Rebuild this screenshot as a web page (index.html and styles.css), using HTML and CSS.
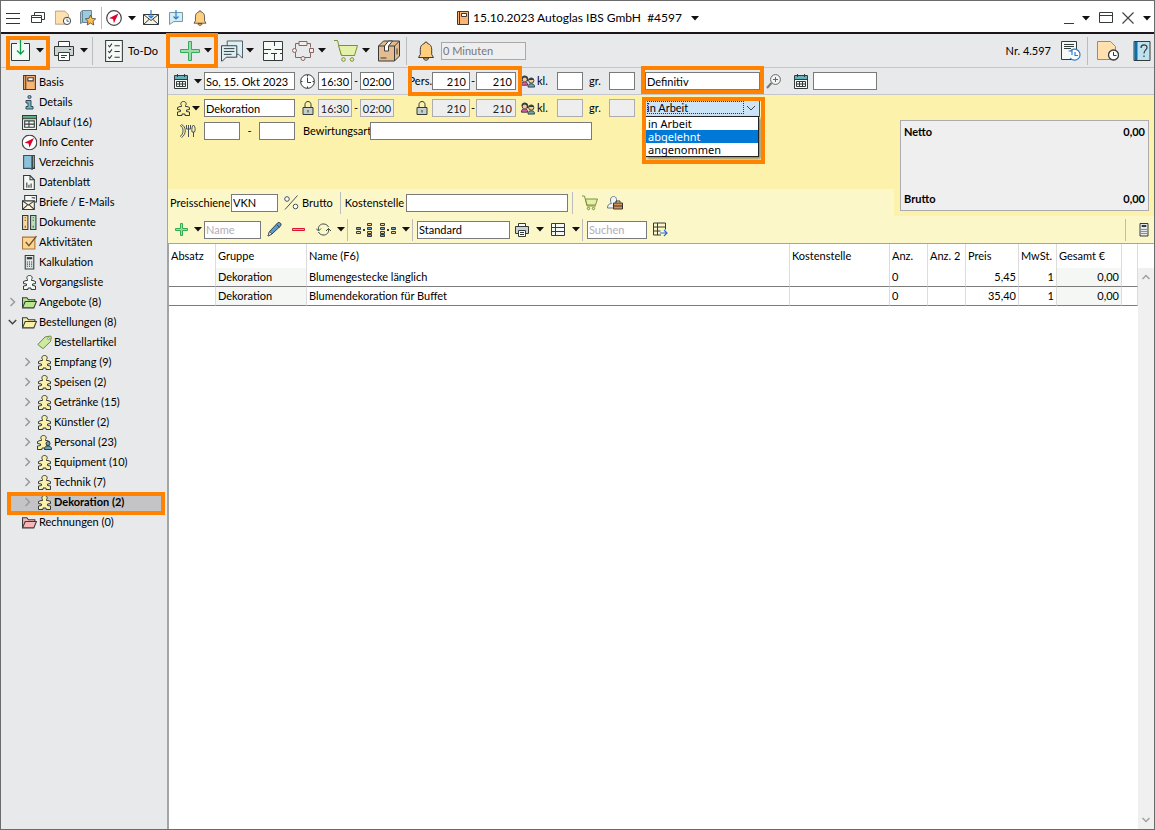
FILE: index.html
```html
<!DOCTYPE html>
<html lang="de">
<head>
<meta charset="utf-8">
<title>15.10.2023 Autoglas IBS GmbH #4597</title>
<link rel="stylesheet" href="styles.css">
</head>
<body>
<svg class="defs" aria-hidden="true">
  <symbol id="down" viewBox="0 0 8 5"><path d="M0 0h8L4 4.600z" fill="#111"/></symbol>
  <symbol id="menu" viewBox="0 0 14 14"><path d="M0 2.500h14M0 7.500h14M0 12.500h14" stroke="#333"/></symbol>
  <symbol id="windows" viewBox="0 0 14 14" fill="none" stroke="#333b3b"><path d="M3.500 4V1.500h10v7H11M.5 4.500h10v7H.5zM.5 6.500h10"/></symbol>
  <symbol id="folderclock" viewBox="0 0 22 20"><path d="M.5 18.500V.5h13l5 5v10l-3 3z" fill="#ffe0ae" stroke="#9a8a70"/><circle cx="16.500" cy="14" r="5" fill="#fff" stroke="#333b3b" stroke-width="1.300"/><path d="M16.500 11v3.500h3" fill="none" stroke="#333b3b"/></symbol>
  <symbol id="bookstar" viewBox="0 0 16 16"><path d="M.5 13.500V2l2-1.500h9v12h-9z" fill="#9ccbe0" stroke="#6b8794"/><path d="M2.500.5v12" stroke="#6b8794"/><path d="M10.500 5l1.600 3.400 3.600.4-2.700 2.500.8 3.700-3.300-1.900-3.300 1.900.8-3.700-2.700-2.500 3.600-.4z" fill="#fdbf4c" stroke="#4d463c" stroke-width=".8"/></symbol>
  <symbol id="compass" viewBox="0 0 16 16"><circle cx="8" cy="8" r="7.300" fill="#fff" stroke="#444" stroke-width="1.200"/><path d="M12.500 3.500L3 8.200l4.100.9.800 4.100z" fill="#e1002d"/></symbol>
  <symbol id="mail" viewBox="0 0 16 16"><path d="M.5 4.500h15v10H.5z" fill="#f8f4e8" stroke="#333b3b"/><path d="M.5 4.500l7.500 6 7.500-6M.5 14.500l5.500-5M15.500 14.500l-5.500-5" fill="none" stroke="#333b3b"/><path d="M8 0v8M5.500 5.500L8 8l2.500-2.500" fill="none" stroke="#2a7fd0" stroke-width="1.200"/></symbol>
  <symbol id="bubble" viewBox="0 0 14 16"><path d="M.5 2.500h13v9H5l-4.500 3z" fill="#d5edf4" stroke="#7899a4"/><path d="M7 0v9M4.500 6.500L7 9l2.500-2.500" fill="none" stroke="#2a7fd0" stroke-width="1.200"/></symbol>
  <symbol id="bell" viewBox="0 0 16 20"><path d="M6.500 2.500a1.500 1.500 0 0 1 3 0c3 .8 4.200 3 4.200 6v5l1.800 3H.5l1.800-3v-5c0-3 1.200-5.200 4.200-6z" fill="#ffcf7d" stroke="#3c3c3c"/><path d="M5.500 17h5c0 3-5 3-5 0z" fill="#f4b860" stroke="#3c3c3c"/></symbol>
  <symbol id="book" viewBox="0 0 12 14"><path d="M.5.5h11v13H.5z" fill="#fab473" stroke="#3f3a36"/><path d="M2.500.5v13" stroke="#3f3a36"/><path d="M4.500 2.500h5v3h-5z" fill="#fff" stroke="#3f3a36"/></symbol>
  <symbol id="min" viewBox="0 0 10 14"><path d="M0 12.500h10" stroke="#333b3b"/></symbol>
  <symbol id="max" viewBox="0 0 14 12"><path d="M.5.5h13v10H.5zM.5 3.500h13" fill="none" stroke="#333b3b"/></symbol>
  <symbol id="close" viewBox="0 0 12 12"><path d="M.5.5l11 11M11.500.5l-11 11" stroke="#444" stroke-width="1.200"/></symbol>
  <symbol id="save" viewBox="0 0 20 22"><path d="M6 3.500H.5v17h18v-17H13" fill="#f6faf6" stroke="#333b3b"/><path d="M9.500 0v14M6 10.500l3.500 3.500 3.500-3.500" fill="none" stroke="#0aa04a" stroke-width="1.300"/></symbol>
  <symbol id="printer" viewBox="0 0 20 20"><path d="M4.500 6V.5h11V6" fill="#fff" stroke="#333b3b"/><path d="M.5 5.500h19v9H.5z" fill="#ccd3d3" stroke="#333b3b"/><path d="M4.500 11.500h11v8h-11z" fill="#fff" stroke="#333b3b"/><path d="M7 14.500h6M7 16.500h4M15 8.500h2" stroke="#333b3b"/></symbol>
  <symbol id="printersmall" viewBox="0 0 14 14"><path d="M3.500 4V.5h7V4" fill="#fff" stroke="#333b3b"/><path d="M.5 3.500h13v7H.5z" fill="#ccd3d3" stroke="#333b3b"/><path d="M3.500 7.500h7v6h-7z" fill="#fff" stroke="#333b3b"/><path d="M5 9.500h4M5 11.500h4" stroke="#333b3b"/></symbol>
  <symbol id="checklist" viewBox="0 0 17 21"><path d="M.5.5h16v20H.5z" fill="#f6faf6" stroke="#333b3b"/><path d="M3 5l1.300 1.500L6.500 3.500M3 10.500L4.300 12l2.200-3M3 16l1.300 1.500 2.200-3M9 5.500h5M9 11h5M9 16.500h5" fill="none" stroke="#333b3b"/></symbol>
  <symbol id="plus" viewBox="0 0 20 20"><path d="M8.500.5h3v8h8v3h-8v8h-3v-8h-8v-3h8z" fill="#9bdcae" stroke="#35ab56"/></symbol>
  <symbol id="plussmall" viewBox="0 0 14 14"><path d="M5.500.5h2v5h5v2h-5v5h-2v-5h-5v-2h5z" fill="#9bdcae" stroke="#35ab56"/></symbol>
  <symbol id="chat" viewBox="0 0 23 22"><path d="M6.500.5h16v18l-4-4H6.500z" fill="#dceff4" stroke="#4a5a5e"/><path d="M.5 5.500h16v12h-11l-4 4H.5z" fill="#dceff4" stroke="#333b3b"/><path d="M3 8.500h11M3 11.500h11M3 14.500h8" stroke="#333b3b"/></symbol>
  <symbol id="plan" viewBox="0 0 20 20"><path d="M.5.5h19v19H.5z" fill="#f6faf6" stroke="#333b3b"/><path d="M0 8.500h8M11.500 0v5M11.500 8.500h8M0 12.500h5M8 12.500h6M11.500 12.500v7M17 12.500h3" fill="none" stroke="#333b3b"/></symbol>
  <symbol id="ring" viewBox="0 0 22 20" fill="#f5ecec" stroke="#8a6464"><path d="M7 2.500H3.500v14H9M15 2.500h3.500v4M18.500 11v5.500H13" fill="none"/><path d="M7 .5h8v4H7zM17.500 7.500h4v4h-4z"/><circle cx="2.500" cy="9.500" r="2"/><circle cx="11" cy="17.500" r="2"/></symbol>
  <symbol id="cart" viewBox="0 0 24 22"><path d="M0 .5h3.500l4 15H21" fill="none" stroke="#7c9136"/><path d="M4.500 5.500h19l-3 10h-13z" fill="#e3f1a9" stroke="#7c9136"/><circle cx="9.500" cy="19.500" r="1.800" fill="#e3f1a9" stroke="#7c9136"/><circle cx="18" cy="19.500" r="1.800" fill="#e3f1a9" stroke="#7c9136"/></symbol>
  <symbol id="cartsmall" viewBox="0 0 16 15"><path d="M0 .5h2.500l2.500 10h9" fill="none" stroke="#7c9136"/><path d="M3.500 3.500h12l-2 6h-8.500z" fill="#e3f1a9" stroke="#7c9136"/><circle cx="6.500" cy="13" r="1.200" fill="#e3f1a9" stroke="#7c9136"/><circle cx="11.500" cy="13" r="1.200" fill="#e3f1a9" stroke="#7c9136"/></symbol>
  <symbol id="box" viewBox="0 0 22 21"><path d="M.5 5.500l5-5h16v15l-5 5H.5z" fill="#e3bd91" stroke="#3c3a37"/><path d="M.5 5.500h16l5-5M16.500 5.500v15" fill="none" stroke="#3c3a37"/><path d="M6.500 5.500l4-5h4l-4 5v5h-4z" fill="#fff" stroke="#3c3a37"/><path d="M2.500 17.500h6M19 8v6" stroke="#3c3a37"/></symbol>
  <symbol id="history" viewBox="0 0 20 20"><path d="M.5.5h15v18H.5z" fill="#f6faf6" stroke="#333b3b"/><path d="M3 3.500h10M3 5.500h10M3 7.500h7" stroke="#333b3b"/><circle cx="14" cy="14" r="5.200" fill="#fff"/><path d="M9 10.500a5.500 5.500 0 1 1 .2 6.500M7.500 10h3.500v4M14 11v3.500h3" fill="none" stroke="#2a7fc8" stroke-width="1.200"/></symbol>
  <symbol id="help" viewBox="0 0 17 20"><path d="M.5.500h16v19H.5z" fill="#bfe0ee" stroke="#333b3b"/><path d="M1 1h3v18H1z" fill="#0b6ea8"/><path d="M7.500 7c0-4 6-4 6-.5 0 2.500-3 2.500-3 6M10.500 14.500v1.500" fill="none" stroke="#333b3b" stroke-width="1.200"/></symbol>
  <symbol id="info" viewBox="0 0 10 15"><circle cx="5" cy="2" r="1.600" fill="#6fb5cc" stroke="#3b4a50"/><path d="M1.500 5.500h5v6h2v2.500h-7v-2.500h2v-3.500h-2z" fill="#6fb5cc" stroke="#3b4a50"/></symbol>
  <symbol id="schedule" viewBox="0 0 14 14"><path d="M.5.5h13v13H.5z" fill="#f6faf6" stroke="#333b3b"/><path d="M1 1h12v2.500H1z" fill="#54a978"/><path d="M.5 3.500h13M2.500 5.500h9v6h-9zM2.500 8.500h9M6.500 5.500v6" fill="none" stroke="#333b3b"/></symbol>
  <symbol id="dir" viewBox="0 0 12 14"><path d="M2.500.5h8v12h-2" fill="#8cc3d8" stroke="#333b3b"/><path d="M.5.5h8v13l-2-1h-6z" fill="#8cc3d8" stroke="#35525e"/><path d="M8.500 1v12M10.500 11v2" stroke="#333b3b"/></symbol>
  <symbol id="sheet" viewBox="0 0 12 14"><path d="M.5.5h6l4 4v9H.5z" fill="#f6faf6" stroke="#333b3b"/><path d="M6.500.5v4h4M3.500 7v5M5.500 9v3M7.500 8v4" fill="none" stroke="#333b3b"/></symbol>
  <symbol id="letters" viewBox="0 0 14 14"><path d="M2.500 5V.5h11v6H12" fill="#f6faf6" stroke="#333b3b"/><path d="M9 2.500h2.500v1" fill="none" stroke="#333b3b"/><path d="M.5 5.500h11v8H.5z" fill="#fff6dc" stroke="#333b3b"/><path d="M.5 5.500l5.500 4 5.500-4M.5 13.500L5 9.500M11.500 13.500L7 9.500" fill="none" stroke="#333b3b"/></symbol>
  <symbol id="docs" viewBox="0 0 14 14"><path d="M.5.5h5v13h-5z" fill="#fbd79a" stroke="#333b3b"/><path d="M8 .5h5v13H8z" fill="#b9dfbd" stroke="#333b3b"/><path d="M3 2v1M3 4.500v1M3 10v2M10.500 2v1M10.500 4.500v1M10.500 10v2" stroke="#555"/></symbol>
  <symbol id="tasks" viewBox="0 0 14 13"><path d="M.5 1.500h11.500v11H.5z" fill="#fdd592" stroke="#a8763a"/><path d="M3.500 6l3 3.500L13.500.5" fill="none" stroke="#6d5026" stroke-width="1.200"/></symbol>
  <symbol id="calc" viewBox="0 0 9 14"><path d="M.5.500h8v12.500h-8z" fill="#e4e8e8" stroke="#333b3b"/><path d="M2.500 2.500h4v1h-4z" fill="#777" stroke="#333b3b"/><path d="M2 6.500h1m1 0h1m1 0h1M2 8.500h1m1 0h1m1 0h1M2 10.500h1m1 0h1m1 0h1" stroke="#333b3b"/></symbol>
  <symbol id="puzzle" viewBox="0 0 13 15"><path d="M.5 6.500L3 5.500H4.500V4.600C3 2.500 4.200.5 6.500.5s3.500 2 2 4.100v.9H10l2.500 1v2L9.500 9v1.500l3 .5v3.500H8V13H5v1.500H.5V11l3-.5V9l-3-.5z" stroke="#333b3b"/></symbol>
  <symbol id="person" viewBox="0 0 8 9"><circle cx="4" cy="2.500" r="2" fill="#68a7b9" stroke="#333b3b"/><path d="M.5 8.500c0-3 1.500-3.500 3.500-3.500s3.500.5 3.500 3.500z" fill="#68a7b9" stroke="#333b3b"/></symbol>
  <symbol id="folder" viewBox="0 0 14 12"><path d="M.5 10.500V1.500h4l1.500 2h6V5" stroke="#333b3b"/><path d="M.5 11l2.500-6h10.500L11 11z" stroke="#333b3b"/></symbol>
  <symbol id="tag" viewBox="0 0 15 14"><path d="M.8 9L8 1.500l5.500-1 .8 1-.8 4.500-7.500 7.200z" fill="#cdea9f" stroke="#6b8a45"/><circle cx="11.500" cy="3.200" r="1" fill="#fff" stroke="#6b8a45" stroke-width=".7"/></symbol>
  <symbol id="right" viewBox="0 0 8 10"><path d="M2 1l4 4-4 4" fill="none" stroke="#9a9a9a" stroke-width="1.500"/></symbol>
  <symbol id="open" viewBox="0 0 9 10"><path d="M.8 3L4.500 6.700 8.200 3" fill="none" stroke="#444" stroke-width="1.500"/></symbol>
  <symbol id="cal" viewBox="0 0 15 15"><path d="M.5 1.500h13v13H.5z" fill="#f6faf6" stroke="#333b3b"/><path d="M1 2h12v3H1z" fill="#67b1ba"/><path d="M.5 5.500h13M3.500 0v3M10.500 0v3M2.500 7.500h9v5h-9zM2.500 10h9M5.500 7.500v5M8.500 7.500v5" fill="none" stroke="#333b3b"/></symbol>
  <symbol id="clock" viewBox="0 0 15 15"><circle cx="7.500" cy="7.500" r="6.900" fill="#fff" stroke="#333b3b"/><path d="M7.500 3.500v5H11M7.500 1v1.500M7.500 12.500V14M1 7.500h1.500M12.500 7.500H14" fill="none" stroke="#333b3b"/></symbol>
  <symbol id="lock" viewBox="0 0 11 14"><path d="M2.500 6V3.500c0-4 6-4 6 0V6" fill="none" stroke="#333b3b"/><path d="M.5 6.500h10v7H.5z" fill="#c6cfc9" stroke="#333b3b"/><path d="M5.500 9v2.500" stroke="#333b3b"/></symbol>
  <symbol id="dining" viewBox="0 0 17 14" fill="none" stroke="#46505a"><path d="M1 1.500c4 1 4 9 0 11M2.500.5c5 2 5 10 0 13"/><path d="M7.500 1v4h4V1M9.500 1v12M14.500 13V8h-1.500c-.5-3 0-6 1.500-7 2 2 2 5 1 7h-1"/></symbol>
  <symbol id="kids" viewBox="0 0 15 14"><path d="M.5 4.500c0-5 7-4 7-1l1 3-2 1-5 0z" fill="#333b3b"/><circle cx="4" cy="5.500" r="2.200" fill="#f4c9a0"/><path d="M.5 11.500c0-3 1.500-3.500 3.500-3.500s3 .5 3 3.500z" fill="#e758a9" stroke="#333b3b"/><circle cx="11" cy="6.500" r="2.800" fill="#f4c9a0" stroke="#333b3b"/><path d="M8 6c1-3 5-3 6 0z" fill="#333b3b"/><path d="M7.500 13.500c0-3 1.500-3.500 3.500-3.500s3.500.5 3.500 3.500z" fill="#68a7b9" stroke="#333b3b"/></symbol>
  <symbol id="search" viewBox="0 0 15 15"><circle cx="9.500" cy="5.500" r="4.900" fill="#f4f4f4" stroke="#666"/><path d="M9.500 3v5M7 5.500h5" stroke="#666"/><path d="M5.500 9L1 14" stroke="#777" stroke-width="2"/></symbol>
  <symbol id="percent" viewBox="0 0 15 15" fill="#fff" stroke="#46505a"><circle cx="3" cy="4" r="2.300"/><circle cx="11.500" cy="11.500" r="2.300"/><path d="M13.500.5L1 14.500"/></symbol>
  <symbol id="client" viewBox="0 0 16 15"><path d="M.5 12.500c0-3 1-4 4-4.500-2-3-1-7 2-7s4 3.500 2 7l1 4.500z" fill="#f0f6f8" stroke="#6c7a7e"/><path d="M6.500 7.500h9v6h-9z" fill="#d8914f" stroke="#3c3430"/><path d="M9 7V5.500h4V7M6.500 10.500h9" fill="none" stroke="#3c3430"/></symbol>
  <symbol id="pencil" viewBox="0 0 15 15"><path d="M1 14l1.500-4.500 8.500-9c2-.5 3.500 1 3 3l-9 8.500z" fill="#5b9ad0" stroke="#37474f"/><path d="M1 14l1.500-4.500L5 12z" fill="#f2e6d0" stroke="#37474f" stroke-width=".7"/><path d="M9.500 2.500l3 3" stroke="#37474f"/></symbol>
  <symbol id="minus" viewBox="0 0 14 4"><path d="M.5.5h12v2H.5z" fill="#ff9caf" stroke="#dd1434"/></symbol>
  <symbol id="refresh" viewBox="0 0 15 14" fill="none" stroke="#3c4a44"><path d="M2.500 8C1.500 4 4.500 1 8 1.500c2.500.3 3.800 1.500 4.500 3M12.500 6c1 4-2 7-5.500 6.500-2.500-.3-3.800-1.500-4.500-3"/><path d="M0 6l2.500 2.500L5 6M10 8.500L12.500 6 15 8.500"/></symbol>
  <symbol id="colA" viewBox="0 0 16 14"><path d="M.5 4.500h4v2h-4z" fill="#6aa5c8" stroke="#333b3b"/><path d="M.5 8.500h4v2h-4z" fill="#fdd592" stroke="#333b3b"/><path d="M7 7h2" stroke="#333b3b" stroke-width="2"/><path d="M11.500.5h4v2h-4zM11.500 8.500h4v2h-4z" fill="#fdd592" stroke="#333b3b"/><path d="M11.500 4.500h4v2h-4zM11.500 11.500h4v2h-4z" fill="#6aa5c8" stroke="#333b3b"/></symbol>
  <symbol id="tbl" viewBox="0 0 14 14"><path d="M.5.5h13v12H.5z" fill="#f6faf6" stroke="#333b3b"/><path d="M.5 4.500h13M.5 8.500h13M4.500.5v12" stroke="#333b3b"/></symbol>
  <symbol id="export" viewBox="0 0 15 14"><path d="M8 12.500H.5V.5h12V7M.5 4.500h12M.5 8.500h7M4.500.5v12" fill="none" stroke="#333b3b"/><path d="M7 10.500h7M11 7.500l3 3-3 3" fill="none" stroke="#2a6fd0" stroke-width="1.200"/></symbol>
  <symbol id="up" viewBox="0 0 8 6"><path d="M.5 5L4 1.500 7.500 5" fill="none" stroke="#a0a0a0" stroke-width="1.500"/></symbol>
  <symbol id="chevron" viewBox="0 0 10 6"><path d="M1 1l4 4 4-4" fill="none" stroke="#444"/></symbol>
</svg>

<div class="window">
  <header class="titlebar">
    <nav class="bar" aria-label="Schnellzugriff">
      <button class="tool w24" aria-label="Menü"><svg class="i14"><use href="#menu"/></svg></button>
      <button class="tool w26" aria-label="Fenster"><svg class="i14"><use href="#windows"/></svg></button>
      <button class="tool w24" aria-label="Termin"><svg class="i16"><use href="#folderclock"/></svg></button>
      <button class="tool w26" aria-label="Favoriten"><svg class="i16"><use href="#bookstar"/></svg></button>
      <span class="sep"></span>
      <button class="tool w24" aria-label="Info Center"><svg class="i16"><use href="#compass"/></svg></button>
      <button class="tool w12" aria-label="Mehr"><svg class="arrow"><use href="#down"/></svg></button>
      <button class="tool w26" aria-label="Mail"><svg class="i16"><use href="#mail"/></svg></button>
      <button class="tool w24" aria-label="Notiz"><svg class="i16"><use href="#bubble"/></svg></button>
      <button class="tool w24" aria-label="Erinnerung"><svg class="i16"><use href="#bell"/></svg></button>
    </nav>
    <h1 class="title"><svg class="i14"><use href="#book"/></svg><span>15.10.2023 Autoglas IBS GmbH&nbsp; #4597</span><svg class="arrow"><use href="#down"/></svg></h1>
    <div class="bar bar-end">
      <button class="tool w14" aria-label="Minimieren"><svg class="i14"><use href="#min"/></svg></button>
      <button class="tool w20" aria-label="Mehr"><svg class="arrow"><use href="#down"/></svg></button>
      <button class="tool w20" aria-label="Maximieren"><svg class="i14"><use href="#max"/></svg></button>
      <button class="tool w24" aria-label="Schließen"><svg class="i12"><use href="#close"/></svg></button>
      <button class="tool w14" aria-label="Mehr"><svg class="arrow"><use href="#down"/></svg></button>
    </div>
  </header>

  <div class="toolbar">
    <div class="tools-left">
      <div class="mark mark-save">
        <button class="tool w24" aria-label="Speichern"><svg class="i22"><use href="#save"/></svg></button>
        <button class="tool w14" aria-label="Speicheroptionen"><svg class="arrow"><use href="#down"/></svg></button>
      </div>
      <button class="tool w26" aria-label="Drucken"><svg class="i20"><use href="#printer"/></svg></button>
      <button class="tool w14" aria-label="Druckoptionen"><svg class="arrow"><use href="#down"/></svg></button>
      <span class="sep tall"></span>
      <button class="tool todo"><svg class="i22"><use href="#checklist"/></svg>To-Do</button>
    </div>
    <div class="tools-main">
      <div class="mark mark-add">
        <button class="tool w24" aria-label="Hinzufügen"><svg class="i20"><use href="#plus"/></svg></button>
        <button class="tool w12" aria-label="Mehr"><svg class="arrow"><use href="#down"/></svg></button>
      </div>
      <button class="tool w24" aria-label="Kommentare"><svg class="i22"><use href="#chat"/></svg></button>
      <button class="tool w12" aria-label="Mehr"><svg class="arrow"><use href="#down"/></svg></button>
      <button class="tool w34" aria-label="Raumplan"><svg class="i20"><use href="#plan"/></svg></button>
      <button class="tool w26" aria-label="Ablauf"><svg class="i22"><use href="#ring"/></svg></button>
      <button class="tool w12" aria-label="Mehr"><svg class="arrow"><use href="#down"/></svg></button>
      <button class="tool cartbtn" aria-label="Warenkorb"><svg class="i24"><use href="#cart"/></svg></button>
      <button class="tool w12" aria-label="Mehr"><svg class="arrow"><use href="#down"/></svg></button>
      <button class="tool w34" aria-label="Paket"><svg class="i22"><use href="#box"/></svg></button>
      <span class="sep tall"></span>
      <button class="tool bellbtn" aria-label="Erinnerung"><svg class="i20"><use href="#bell"/></svg></button>
      <input class="minutes" aria-label="Erinnerung in Minuten" value="0 Minuten" disabled>
    </div>
    <div class="tools-right">
      <span>Nr. 4.597</span>
      <button class="tool w36" aria-label="Verlauf"><svg class="i20"><use href="#history"/></svg></button>
      <span class="sep tall"></span>
      <button class="tool w40" aria-label="Wiedervorlage"><svg class="i22"><use href="#folderclock"/></svg></button>
      <button class="tool w26" aria-label="Hilfe"><svg class="i20"><use href="#help"/></svg></button>
    </div>
  </div>

  <div class="body">
    <nav class="sidebar" aria-label="Vorgang">
      <ul class="tree">
        <li><i></i><svg><use href="#book"/></svg>Basis</li>
        <li><i></i><svg><use href="#info"/></svg>Details</li>
        <li><i></i><svg><use href="#schedule"/></svg>Ablauf (16)</li>
        <li><i></i><svg class="big"><use href="#compass"/></svg>Info Center</li>
        <li><i></i><svg><use href="#dir"/></svg>Verzeichnis</li>
        <li><i></i><svg><use href="#sheet"/></svg>Datenblatt</li>
        <li><i></i><svg><use href="#letters"/></svg>Briefe / E-Mails</li>
        <li><i></i><svg><use href="#docs"/></svg>Dokumente</li>
        <li><i></i><svg><use href="#tasks"/></svg>Aktivitäten</li>
        <li><i></i><svg><use href="#calc"/></svg>Kalkulation</li>
        <li><i></i><svg class="pale"><use href="#puzzle"/></svg>Vorgangsliste</li>
        <li><i><svg><use href="#right"/></svg></i><svg class="green"><use href="#folder"/></svg>Angebote (8)</li>
        <li><i><svg><use href="#open"/></svg></i><svg class="yellow"><use href="#folder"/></svg>Bestellungen (8)</li>
        <li class="sub"><i></i><svg><use href="#tag"/></svg>Bestellartikel</li>
        <li class="sub"><i><svg><use href="#right"/></svg></i><svg class="yellow"><use href="#puzzle"/></svg>Empfang (9)</li>
        <li class="sub"><i><svg><use href="#right"/></svg></i><svg class="yellow"><use href="#puzzle"/></svg>Speisen (2)</li>
        <li class="sub"><i><svg><use href="#right"/></svg></i><svg class="yellow"><use href="#puzzle"/></svg>Getränke (15)</li>
        <li class="sub"><i><svg><use href="#right"/></svg></i><svg class="yellow"><use href="#puzzle"/></svg>Künstler (2)</li>
        <li class="sub"><i><svg><use href="#right"/></svg></i><svg class="yellow"><use href="#puzzle" x="-1"/><use href="#person" x="7" y="6" width="8" height="9"/></svg>Personal (23)</li>
        <li class="sub"><i><svg><use href="#right"/></svg></i><svg class="yellow"><use href="#puzzle"/></svg>Equipment (10)</li>
        <li class="sub"><i><svg><use href="#right"/></svg></i><svg class="yellow"><use href="#puzzle"/></svg>Technik (7)</li>
        <li class="sub current mark"><i><svg><use href="#right"/></svg></i><svg class="yellow"><use href="#puzzle"/></svg>Dekoration (2)</li>
        <li><i></i><svg class="pink"><use href="#folder"/></svg>Rechnungen (0)</li>
      </ul>
    </nav>

    <main class="main">
      <div class="line event">
        <span class="lead"><svg class="i15"><use href="#cal"/></svg><svg class="arrow"><use href="#down"/></svg></span>
        <input class="w91" aria-label="Datum" value="So, 15. Okt 2023">
        <span class="ico"><svg class="i15"><use href="#clock"/></svg></span>
        <input class="w34 mid" aria-label="Beginn" value="16:30"><span class="dash">-</span><input class="w34 mid" aria-label="Ende" value="02:00">
        <span class="mark mark-pers">
          <label for="pers">Pers.</label>
          <input id="pers" class="w38 num" value="210"><span class="dash">-</span><input class="w40 num" aria-label="Personen bis" value="210">
        </span>
        <label class="kl" for="kl1"><svg class="i14"><use href="#kids"/></svg>kl.</label><input id="kl1" class="w26">
        <label class="gr" for="gr1">gr.</label><input id="gr1" class="w26">
        <span class="mark mark-status"><input class="w115" aria-label="Status" value="Definitiv"></span>
        <span class="zoomico"><svg class="i15"><use href="#search"/></svg></span>
        <span class="calico"><svg class="i15"><use href="#cal"/></svg></span>
        <input class="w64" aria-label="Optionsdatum">
      </div>

      <div class="order">
        <div class="order-left">
          <div class="line">
            <span class="lead"><svg class="i15 yellow"><use href="#puzzle"/></svg><svg class="arrow"><use href="#down"/></svg></span>
            <input class="w91" aria-label="Bezeichnung" value="Dekoration">
            <span class="ico"><svg class="i14"><use href="#lock"/></svg></span>
            <input class="w34 mid" aria-label="Beginn" value="16:30" disabled><span class="dash">-</span><input class="w34 mid" aria-label="Ende" value="02:00" disabled>
            <span class="mark-pers">
              <span class="lockcell"><svg class="i14"><use href="#lock"/></svg></span>
              <input class="w38 num" aria-label="Personen von" value="210" disabled><span class="dash">-</span><input class="w40 num" aria-label="Personen bis" value="210" disabled>
            </span>
            <label class="kl" for="kl2"><svg class="i14"><use href="#kids"/></svg>kl.</label><input id="kl2" class="w26" disabled>
            <label class="gr" for="gr2">gr.</label><input id="gr2" class="w26" disabled>
            <div class="mark mark-select">
              <select aria-label="Bestellstatus"><option>in Arbeit</option><option>abgelehnt</option><option>angenommen</option></select>
              <svg class="chevron"><use href="#chevron"/></svg>
              <ul class="options" role="listbox" aria-label="Bestellstatus">
                <li role="option">in Arbeit</li>
                <li role="option" aria-selected="true" class="chosen">abgelehnt</li>
                <li role="option">angenommen</li>
              </ul>
            </div>
          </div>
          <div class="line">
            <span class="lead meal"><svg class="i17"><use href="#dining"/></svg></span>
            <input class="w36" aria-label="Bewirtung von"><span class="dash wide">-</span><input class="w36" aria-label="Bewirtung bis">
            <label class="art" for="art">Bewirtungsart</label><input id="art" class="w222">
          </div>
          <div class="line pale-row">
            <label for="vkn">Preisschiene</label><input id="vkn" class="w47" value="VKN">
            <button class="tool brutto"><svg class="i15"><use href="#percent"/></svg>Brutto</button>
            <span class="sep"></span>
            <label for="kst">Kostenstelle</label><input id="kst" class="w162">
            <span class="sep"></span>
            <button class="tool w26" aria-label="Warenkorb"><svg class="i16"><use href="#cartsmall"/></svg></button>
            <button class="tool w24" aria-label="Lieferant"><svg class="i16"><use href="#client"/></svg></button>
          </div>
        </div>
        <aside class="totals">
          <dl>
            <div><dt>Netto</dt><dd>0,00</dd></div>
            <div><dt>Brutto</dt><dd>0,00</dd></div>
          </dl>
        </aside>
      </div>

      <div class="line actions">
        <button class="tool lead" aria-label="Neu"><svg class="i14"><use href="#plussmall"/></svg><svg class="arrow"><use href="#down"/></svg></button>
        <input class="w57" aria-label="Name" placeholder="Name">
        <button class="tool w26" aria-label="Bearbeiten"><svg class="i15"><use href="#pencil"/></svg></button>
        <button class="tool w24" aria-label="Löschen"><svg class="i14"><use href="#minus"/></svg></button>
        <button class="tool w24" aria-label="Aktualisieren"><svg class="i15"><use href="#refresh"/></svg></button>
        <button class="tool w12" aria-label="Mehr"><svg class="arrow"><use href="#down"/></svg></button>
        <span class="sep"></span>
        <button class="tool w24" aria-label="Einrücken"><svg class="i16"><use href="#colA"/></svg></button>
        <button class="tool w24" aria-label="Ausrücken"><svg class="i16 flip"><use href="#colA"/></svg></button>
        <button class="tool w12" aria-label="Mehr"><svg class="arrow"><use href="#down"/></svg></button>
        <span class="sep"></span>
        <input class="w93" aria-label="Ansicht" value="Standard">
        <button class="tool w24" aria-label="Drucken"><svg class="i14"><use href="#printersmall"/></svg></button>
        <button class="tool w12" aria-label="Mehr"><svg class="arrow"><use href="#down"/></svg></button>
        <button class="tool w24" aria-label="Spalten"><svg class="i14"><use href="#tbl"/></svg></button>
        <button class="tool w12" aria-label="Mehr"><svg class="arrow"><use href="#down"/></svg></button>
        <span class="sep"></span>
        <input class="w60" aria-label="Suchen" placeholder="Suchen">
        <button class="tool w26" aria-label="Exportieren"><svg class="i15"><use href="#export"/></svg></button>
        <span class="sep push"></span>
        <button class="tool w20 calcbtn" aria-label="Rechner"><svg class="i14"><use href="#calc"/></svg></button>
      </div>

      <div class="sheet">
        <table>
          <colgroup><col class="c47"><col class="c91"><col><col class="c100"><col class="c38"><col class="c38"><col class="c53"><col class="c38"><col class="c65"><col class="c16"></colgroup>
          <thead><tr><th>Absatz</th><th>Gruppe</th><th>Name (F6)</th><th>Kostenstelle</th><th>Anz.</th><th>Anz. 2</th><th>Preis</th><th>MwSt.</th><th>Gesamt €</th><th></th></tr></thead>
          <tbody>
            <tr><td></td><td class="tint">Dekoration</td><td>Blumengestecke länglich</td><td></td><td>0</td><td></td><td class="r">5,45</td><td class="r">1</td><td class="r tint">0,00</td><td></td></tr>
            <tr><td></td><td class="tint">Dekoration</td><td>Blumendekoration für Buffet</td><td></td><td>0</td><td></td><td class="r">35,40</td><td class="r">1</td><td class="r tint">0,00</td><td></td></tr>
          </tbody>
        </table>
        <div class="scroll"><svg><use href="#up"/></svg><svg class="turn"><use href="#up"/></svg></div>
      </div>
    </main>
  </div>
</div>
</body>
</html>
```
FILE: styles.css
```css
* { box-sizing: border-box; }

body {
  margin: 0;
  font: 11px/16px Lato, "Open Sans", "Noto Sans", sans-serif;
  color: #000;
}

.defs { position: absolute; width: 0; height: 0; }

svg { flex: none; display: block; }
.arrow { width: 8px; height: 5px; }
.i12 { width: 12px; height: 12px; }
.i14 { width: 14px; height: 14px; }
.i15 { width: 15px; height: 15px; }
.i16 { width: 16px; height: 16px; }
.i17 { width: 17px; height: 14px; }
.i20 { width: 20px; height: 20px; }
.i22 { width: 22px; height: 22px; }
.i24 { width: 24px; height: 22px; }
.flip { transform: scaleX(-1); }
.yellow { fill: #fbf0a8; }
.green { fill: #b9e88f; }
.pink { fill: #f8b6b6; }
.pale { fill: #f6faf6; }

.window {
  display: flex;
  flex-direction: column;
  min-height: 100vh;
  border: 1px solid #6b6b6b;
}

/* title bar */
.titlebar {
  display: grid;
  grid-template-columns: 1fr auto 1fr;
  align-items: center;
  height: 33px;
  padding-top: 3px;
  background: #fff;
  border-bottom: 2px solid #1a161c;
}
.bar { display: flex; align-items: center; }
.bar-end { justify-content: flex-end; }
.title {
  display: flex;
  align-items: center;
  gap: 3px;
  margin: 0;
  font-size: 12px;
  font-weight: 400;
  white-space: nowrap;
}
.title .arrow { margin-left: 6px; }

.tool {
  display: flex;
  align-items: center;
  justify-content: center;
  padding: 0;
  border: 0;
  background: none;
  font: inherit;
  color: inherit;
}
.w12 { width: 12px; }
.w14 { width: 14px; }
.w20 { width: 20px; }
.w24 { width: 24px; }
.w26 { width: 26px; }
.w34 { width: 34px; }
.w36 { width: 36px; }
.w38 { width: 38px; }
.w40 { width: 40px; }
.w47 { width: 47px; }
.w57 { width: 57px; }
.w60 { width: 60px; }
.w64 { width: 64px; }
.w91 { width: 91px; }
.w93 { width: 93px; }
.w115 { width: 115px; }
.w162 { width: 162px; }
.w222 { width: 222px; }

.sep { width: 1px; height: 22px; background: #bcbcc0; }
.sep.tall { height: 28px; }

/* orange highlight rings */
.mark { position: relative; }
.mark::after {
  content: "";
  position: absolute;
  z-index: 3;
  border: 4px solid #ff8200;
  pointer-events: none;
}

/* toolbar */
.toolbar {
  display: flex;
  height: 34px;
  background: #e8e9eb;
  border-bottom: 1px solid #c6c6ca;
}
.tools-left, .tools-main, .tools-right { display: flex; align-items: center; }
.tools-left { width: 165px; padding-left: 8px; }
.tools-right { margin-left: auto; }
.mark-save, .mark-add { display: flex; align-items: center; align-self: stretch; }
.mark-save::after { inset: 2px -3px -3px; }
.mark-save { margin-right: 4px; }
.mark-add { padding: 0 8px 0 12px; margin-right: -2px; }
.mark-add::after { inset: -1px 4px -1px 0; }
.tools-left .sep { margin: 0 10px 0 1px; }
.todo { gap: 3px; }
.cartbtn { width: 32px; padding-left: 4px; }
.bellbtn { width: 34px; padding-left: 4px; }
.minutes { width: 85px; }
.tools-right .w36 { padding-left: 4px; }
.tools-right .w26 { padding-left: 2px; }

.body { display: flex; flex: 1; }

/* sidebar */
.sidebar {
  flex: none;
  width: 167px;
  padding-top: 4px;
  background: #e8e9eb;
  border-right: 1px solid #a2a4a6;
}
.tree { margin: 0; padding: 0; list-style: none; }
.tree li {
  display: flex;
  align-items: center;
  height: 20px;
  padding-left: 7px;
  white-space: nowrap;
}
.tree li > i { width: 9px; margin-right: 5px; }
.tree li > i svg { width: 9px; height: 10px; }
.tree li > svg { width: 15px; height: 15px; margin-right: 2px; }
.tree .big { transform: scale(1.07); }
.tree .sub { padding-left: 22px; }
.tree .current {
  font-weight: 700;
  background: linear-gradient(#c4c4c6, #c4c4c6) 7px 0 / 154px 100% no-repeat;
}
.tree .current::after { inset: 0 2px -3px 6px; }

/* form */
.main {
  flex: 1;
  min-width: 0;
  display: flex;
  flex-direction: column;
}
.line { display: flex; align-items: center; white-space: nowrap; }
input, select {
  height: 18px;
  padding: 0 1px;
  border: 1px solid #7a7a7a;
  border-radius: 0;
  background: #fff;
  font: inherit;
  color: #000;
}
input:disabled { background: #eeeeee; border-color: #adadb0; color: #222; }
.toolbar input:disabled { color: #777; border-color: #a9a9ab; }
input::placeholder { color: #b3adba; opacity: 1; }
.num { text-align: right; padding-right: 3px; }
.mid { text-align: center; }

.event {
  height: 27px;
  background: #e8e9eb;
  border-bottom: 1px solid #c6c6ca;
}
.lead { display: flex; align-items: center; justify-content: flex-end; gap: 5px; width: 36px; padding-right: 2px; }
.order .lead { gap: 1px; padding-right: 4px; }
.order .meal { padding-right: 8px; }
.ico { display: flex; justify-content: center; width: 25px; }
.ico + .w34 { margin-left: -2px; }
.dash { width: 8px; text-align: center; }
.dash.wide { width: 19px; }
.mark-pers { display: flex; align-items: center; width: 122px; justify-content: flex-end; }
.mark-pers .dash { width: 6px; }
.mark-pers::after { inset: -6px -6px -6px 14px; }
.lockcell { width: 17px; }
.kl { display: flex; align-items: center; gap: 2px; width: 41px; padding-left: 5px; }
.gr { width: 26px; padding-left: 6px; }
.mark-status { display: flex; margin-left: 10px; }
.mark-status::after { inset: -6px -4px -4px; }
.zoomico { width: 34px; padding-left: 6px; }
.calico { width: 19px; }

.order { display: flex; background: #fcf2ab; }
.order-left { flex: 1; display: flex; flex-direction: column; gap: 5px; padding-top: 4px; }
.mark-select { margin-left: 10px; }
.mark-select select {
  display: block;
  width: 115px;
  appearance: none;
  border-color: #0a64ad;
  background: #cce4f7;
}
.mark-select::before {
  content: "";
  position: absolute;
  inset: 2px 16px 3px 2px;
  border: 1px dotted #333;
  pointer-events: none;
}
.mark-select::after { inset: -2px -5px -47px -3px; }
.chevron {
  position: absolute;
  top: 6px;
  right: 4px;
  width: 10px;
  height: 6px;
  pointer-events: none;
}
.options {
  position: absolute;
  z-index: 2;
  top: 17px;
  left: 0;
  width: 114px;
  margin: 0;
  padding: 0;
  list-style: none;
  border: 1px solid #222;
  background: #fff;
  box-shadow: 2px 2px 3px #8a8560;
  font: 11px/13px "Noto Sans", "Open Sans", sans-serif;
}
.options li { padding-left: 2px; }
.options .chosen { background: #0078d7; color: #fff; }
.art { width: 75px; padding-left: 8px; }
.pale-row {
  height: 27px;
  margin-top: auto;
  padding-left: 2px;
  background: #fcf7c9;
}
.pale-row label { width: 61px; }
.brutto { gap: 3px; padding: 0 7px 0 6px; }
.pale-row .sep { margin-right: 4px; }
.pale-row input + .sep { margin-left: 4px; }

.totals { width: 260px; padding: 25px 5px 5px 6px; }
.totals dl {
  display: flex;
  flex-direction: column;
  justify-content: space-between;
  height: 91px;
  margin: 0;
  padding: 3px;
  border: 1px solid #acacb0;
  background: #efefef;
  font-weight: 700;
}
.totals dl div { display: flex; justify-content: space-between; }
.totals dd { margin: 0; }

.actions { height: 27px; background: #fcf7c9; }
.actions .w12 + .sep { margin-right: 4px; }
.actions .push { margin-left: auto; }
.calcbtn { margin-left: 8px; }

/* item table */
.sheet {
  flex: 1;
  display: flex;
  background: #fff;
  border-top: 1px solid #a2a4a6;
  border-left: 1px solid #a2a4a6;
}
table { flex: 1; align-self: flex-start; border-collapse: separate; border-spacing: 0; table-layout: fixed; width: 100%; }
th { height: 24px; padding: 0 2px; text-align: left; font-weight: 400; white-space: nowrap; border-right: 1px solid #dcdcdc; }
td { height: 19px; padding: 0 2px; border-right: 1px solid #dcdcdc; border-bottom: 1px solid #7c7c7c; white-space: nowrap; }
.r { text-align: right; }
.tint { background: #f4f7f4; }
.c47 { width: 47px; }
.c91 { width: 91px; }
.c100 { width: 100px; }
.c38 { width: 38px; }
.c53 { width: 53px; }
.c65 { width: 65px; }
.c16 { width: 16px; }
.scroll {
  display: flex;
  flex-direction: column;
  align-items: center;
  justify-content: space-between;
  width: 16px;
  margin-top: 24px;
  padding: 6px 0;
  background: #f0f0f0;
}
.scroll svg { width: 8px; height: 6px; }
.turn { transform: rotate(180deg); }
```
